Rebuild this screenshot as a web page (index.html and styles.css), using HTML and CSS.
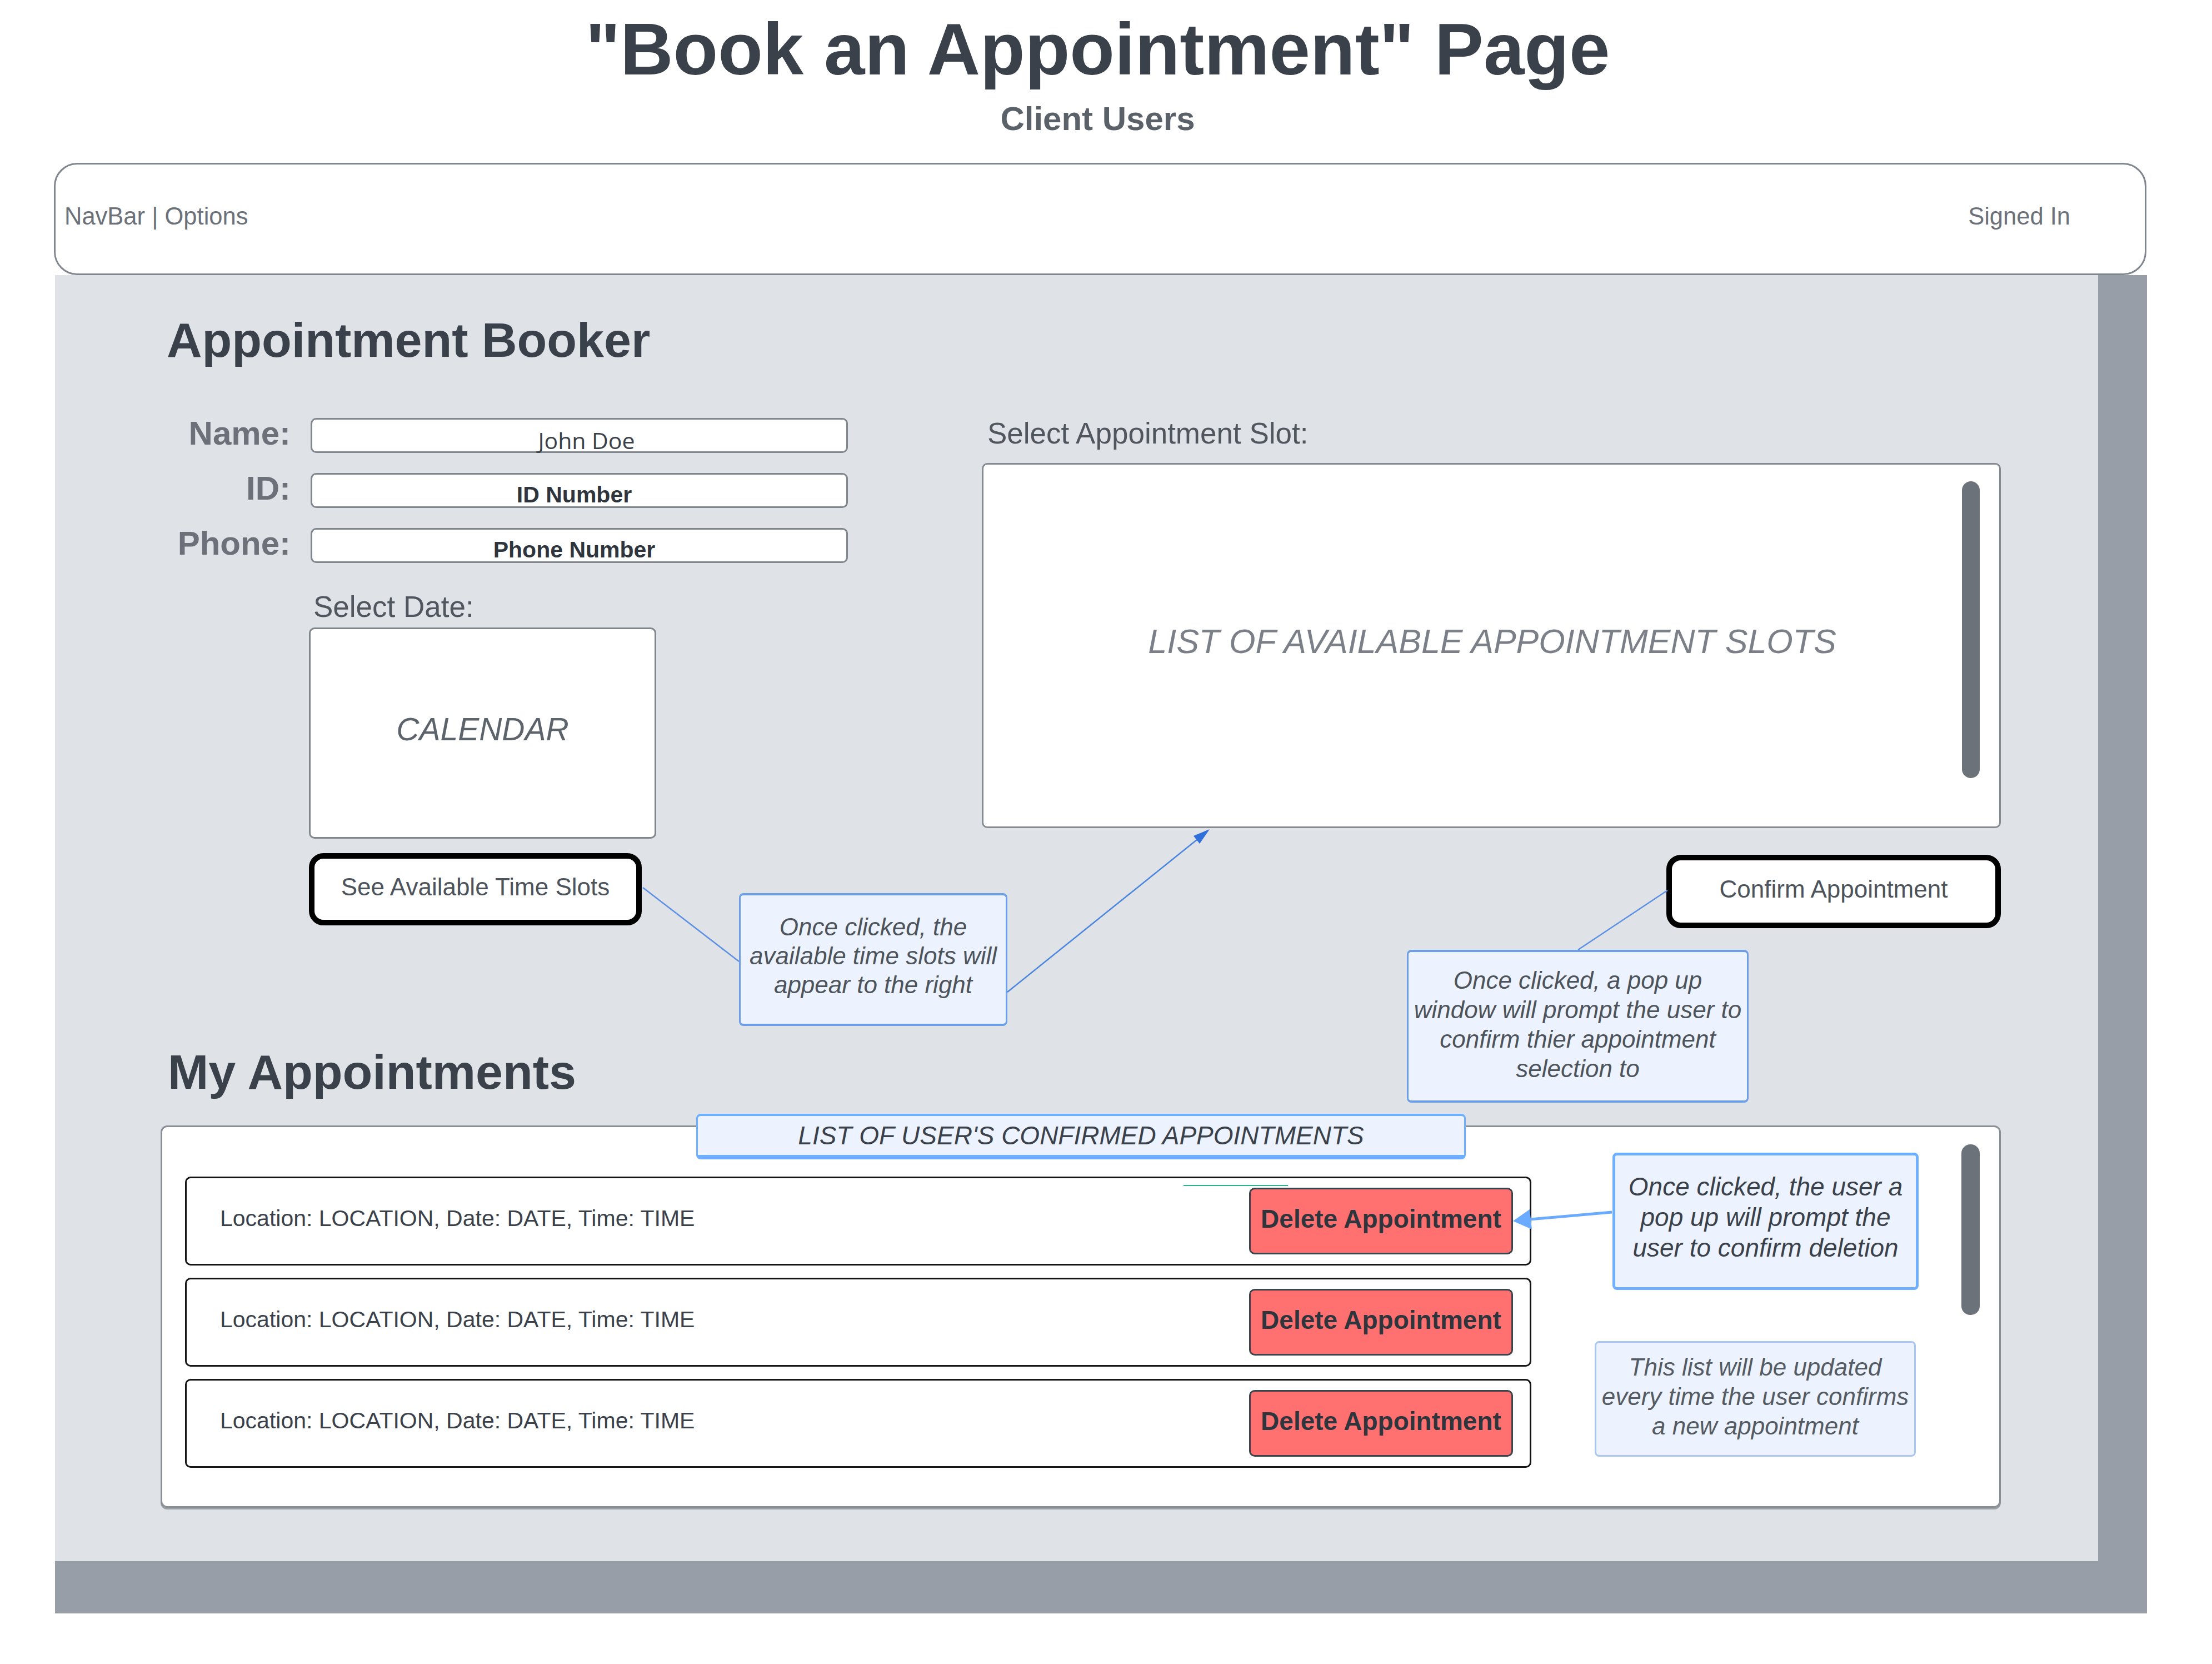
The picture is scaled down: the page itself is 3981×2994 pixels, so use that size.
FILE: index.html
```html
<!DOCTYPE html>
<html lang="en">
<head>
    <meta charset="UTF-8">
    <meta name="viewport" content="width=device-width, initial-scale=1.0">
    <title>Book an Appointment</title>
    <link rel="stylesheet" href="styles.css">
</head>
<body>
    <div class="frame">
        <header class="page-head">
            <h1>"Book an Appointment" Page</h1>
            <p class="subtitle">Client Users</p>
        </header>

        <nav class="navbar">
            <span>NavBar | Options</span>
            <span>Signed In</span>
        </nav>

        <div class="board">
            <main class="sheet">
                <h2 class="section-title">Appointment Booker</h2>

                <section class="booker">
                    <div class="booker-left">
                        <div class="form">
                            <label>Name:</label>
                            <div class="field name">John Doe</div>
                            <label>ID:</label>
                            <div class="field bold">ID Number</div>
                            <label>Phone:</label>
                            <div class="field bold">Phone Number</div>
                        </div>

                        <div class="date">
                            <p class="caption">Select Date:</p>
                            <div class="calendar">CALENDAR</div>
                            <button class="btn">See Available Time Slots</button>
                        </div>
                    </div>

                    <div class="booker-right">
                        <p class="caption">Select Appointment Slot:</p>
                        <div class="slots">
                            <span>LIST OF AVAILABLE APPOINTMENT SLOTS</span>
                            <div class="scrollbar tall"></div>
                        </div>
                        <button class="btn confirm">Confirm Appointment</button>
                    </div>
                </section>

                <h2 class="section-title mine">My Appointments</h2>

                <section class="mylist">
                    <div class="list-title">LIST OF USER'S CONFIRMED APPOINTMENTS</div>

                    <div class="rows">
                        <div class="row">
                            <span class="row-text">Location: LOCATION, Date: DATE, Time: TIME</span>
                            <i class="mark"></i>
                            <button class="delete">Delete Appointment</button>
                        </div>
                        <div class="row">
                            <span class="row-text">Location: LOCATION, Date: DATE, Time: TIME</span>
                            <button class="delete">Delete Appointment</button>
                        </div>
                        <div class="row">
                            <span class="row-text">Location: LOCATION, Date: DATE, Time: TIME</span>
                            <button class="delete">Delete Appointment</button>
                        </div>
                    </div>

                    <div class="notes">
                        <div class="note strong">Once clicked, the user a<br>pop up will prompt the<br>user to confirm deletion</div>
                        <div class="note pale">This list will be updated<br>every time the user confirms<br>a new appointment</div>
                    </div>

                    <div class="scrollbar short"></div>
                </section>

                <!-- annotations -->
                <div class="note slots-note">Once clicked, the<br>available time slots will<br>appear to the right</div>
                <div class="note confirm-note">Once clicked, a pop up<br>window will prompt the user to<br>confirm thier appointment<br>selection to</div>

                <svg class="wires" width="3677" height="2314">
                    <line x1="1058" y1="1102" x2="1231" y2="1235" stroke="#5d90e4" stroke-width="2.5"/>
                    <line x1="1714" y1="1290" x2="2055" y2="1016" stroke="#4a85e0" stroke-width="2.5"/>
                    <polygon points="2078,997 2060,1023 2049,1009" fill="#2f6fdb"/>
                    <line x1="2741" y1="1214" x2="2902" y2="1107" stroke="#5d90e4" stroke-width="2.5"/>
                    <line x1="2802" y1="1686" x2="2654" y2="1699" stroke="#6aabff" stroke-width="5"/>
                    <polygon points="2624,1702 2658,1717 2654,1681" fill="#6aabff"/>
                </svg>
            </main>
        </div>
    </div>
</body>
</html>
```

FILE: styles.css
```css
* {
    box-sizing: border-box;
}

body {
    margin: 0;
    background: #fff;
    font-family: "Liberation Sans", Arial, sans-serif;
    color: #3a414a;
}

.frame {
    margin-left: 97px;
    width: 3767px;
}

/* page heading */
.page-head {
    text-align: center;
    padding: 23px 10px 0 0;
}

.page-head h1 {
    margin: 0;
    font-size: 132px;
    line-height: 1;
    font-weight: bold;
    color: #3a414a;
}

.subtitle {
    margin: 29px 0 0;
    font-size: 60px;
    line-height: 1;
    font-weight: bold;
    color: #5b6169;
}

/* nav */
.navbar {
    position: relative;
    z-index: 1;
    margin: 49px 1px 0 0;
    height: 202px;
    background: #fff;
    border: 3px solid #80868e;
    border-radius: 42px;
    display: flex;
    justify-content: space-between;
    align-items: center;
    padding: 0 134px 10px 16px;
    font-size: 43.5px;
    color: #6b7079;
}

/* board */
.board {
    margin-left: 2px;
    background: #979ea8;
    padding: 0 88px 94px 0;
}

.sheet {
    position: relative;
    background: #dfe2e7;
    padding: 74px 175px 96px 190px;
}

.section-title {
    margin: 0 0 0 11px;
    font-size: 88px;
    line-height: 86px;
    font-weight: bold;
    color: #3a414a;
}

.section-title.mine {
    margin: 216px 0 0 13px;
}

.booker {
    display: grid;
    grid-template-columns: 1478px 1834px;
    align-items: start;
    margin-top: 97px;
}

.form {
    display: grid;
    grid-template-columns: 234px 967px;
    grid-auto-rows: 63px;
    column-gap: 36px;
    row-gap: 36px;
}

.form label {
    align-self: center;
    text-align: right;
    font-size: 60px;
    line-height: 1;
    font-weight: bold;
    color: #6b7079;
    margin-bottom: 8px;
}

.field {
    background: #fff;
    border: 3px solid #80868e;
    border-radius: 10px;
    text-align: center;
    font-size: 41px;
    line-height: 46px;
    padding-top: 13px;
    color: #2f353c;
}

.field.name {
    font-family: "Open Sans", "Liberation Sans", sans-serif;
    padding: 14px 0 0 26px;
    color: #3a414a;
}

.field.bold {
    font-weight: bold;
    padding-right: 18px;
}

.caption {
    margin: 0;
    font-size: 53px;
    line-height: 56px;
    color: #50565e;
}

.date {
    margin: 51px 0 0 267px;
}

.date .caption {
    padding-left: 8px;
}

.calendar {
    margin-top: 9px;
    width: 625px;
    height: 380px;
    background: #fff;
    border: 3px solid #80868e;
    border-radius: 10px;
    display: flex;
    align-items: center;
    justify-content: center;
    padding-bottom: 14px;
    font-size: 57px;
    font-style: italic;
    color: #5d636b;
}

.btn {
    display: block;
    margin-top: 26px;
    width: 599px;
    height: 130px;
    background: #fff;
    border: 10px solid #000;
    border-radius: 26px;
    padding: 0 0 8px;
    font-family: "Liberation Sans", Arial, sans-serif;
    font-size: 44px;
    color: #4d535b;
}

.booker-right .caption {
    margin-left: 10px;
}

.slots {
    margin-top: 25px;
    height: 657px;
    background: #fff;
    border: 3px solid #868b92;
    border-radius: 10px;
    display: flex;
    align-items: flex-start;
    padding: 30px 35px 0 70px;
}

.slots span {
    flex: 1;
    align-self: center;
    text-align: center;
    margin-bottom: 46px;
    font-size: 61px;
    font-style: italic;
    color: #7b8088;
}

.scrollbar {
    width: 32px;
    background: #6c727a;
    border-radius: 16px;
}

.scrollbar.tall {
    height: 534px;
}

.btn.confirm {
    margin: 48px 0 0 auto;
    width: 602px;
    height: 132px;
}

/* my appointments */
.mylist {
    position: relative;
    margin-top: 53px;
    height: 688px;
    background: #fff;
    border: 3px solid #8a8f96;
    border-radius: 12px;
    box-shadow: 0 3px 0 #9ba0a7;
    display: flex;
    align-items: flex-start;
    padding-left: 41px;
}

.list-title {
    position: absolute;
    left: 961px;
    top: -24px;
    width: 1385px;
    height: 82px;
    background: #edf3fe;
    border: 3px solid #6eb0ff;
    border-width: 4px 3px 8px;
    border-radius: 8px;
    display: flex;
    align-items: center;
    justify-content: center;
    font-size: 46px;
    font-style: italic;
    color: #3a414a;
}

.rows {
    margin-top: 89px;
    width: 2423px;
    display: flex;
    flex-direction: column;
    gap: 22px;
}

.row {
    position: relative;
    height: 160px;
    border: 3px solid #151515;
    border-radius: 10px;
    display: flex;
    align-items: center;
    justify-content: space-between;
    padding: 0 30px 0 60px;
    font-size: 41px;
    color: #3a414a;
}

.row-text {
    margin-bottom: 10px;
}

.mark {
    position: absolute;
    left: 1794px;
    top: 12px;
    width: 188px;
    height: 2px;
    background: #2bb38c;
}

.delete {
    width: 475px;
    height: 120px;
    background: #ff7070;
    border: 3px solid #3d434b;
    border-radius: 10px;
    font-family: "Liberation Sans", Arial, sans-serif;
    font-size: 46px;
    font-weight: bold;
    color: #2f353c;
    padding: 0 0 8px;
}

.notes {
    margin-left: 114px;
    width: 583px;
    display: flex;
    flex-direction: column;
}

.scrollbar.short {
    margin: 31px 0 0 77px;
    width: 33px;
    height: 307px;
}

/* callouts */
.note {
    background: #edf3fe;
    border: 3px solid #6d9fe8;
    border-width: 4px 3px;
    border-radius: 8px;
    display: flex;
    align-items: center;
    justify-content: center;
    text-align: center;
    font-size: 44px;
    line-height: 52px;
    font-style: italic;
    color: #4d535b;
}

.note.strong {
    margin: 46px 0 0 32px;
    width: 551px;
    height: 247px;
    border: 5px solid #6eb0ff;
    font-size: 46px;
    line-height: 55px;
    padding-bottom: 14px;
    color: #3a414a;
}

.note.pale {
    margin-top: 92px;
    width: 578px;
    height: 208px;
    border: 3px solid #a9c7ef;
    line-height: 53px;
    padding-bottom: 10px;
    color: #555b63;
}

.slots-note {
    position: absolute;
    left: 1231px;
    top: 1112px;
    width: 483px;
    height: 239px;
    padding-bottom: 14px;
}

.confirm-note {
    position: absolute;
    left: 2433px;
    top: 1214px;
    width: 615px;
    height: 275px;
    line-height: 53px;
    padding-bottom: 8px;
}

.wires {
    position: absolute;
    left: 0;
    top: 0;
    pointer-events: none;
    overflow: visible;
}
```
